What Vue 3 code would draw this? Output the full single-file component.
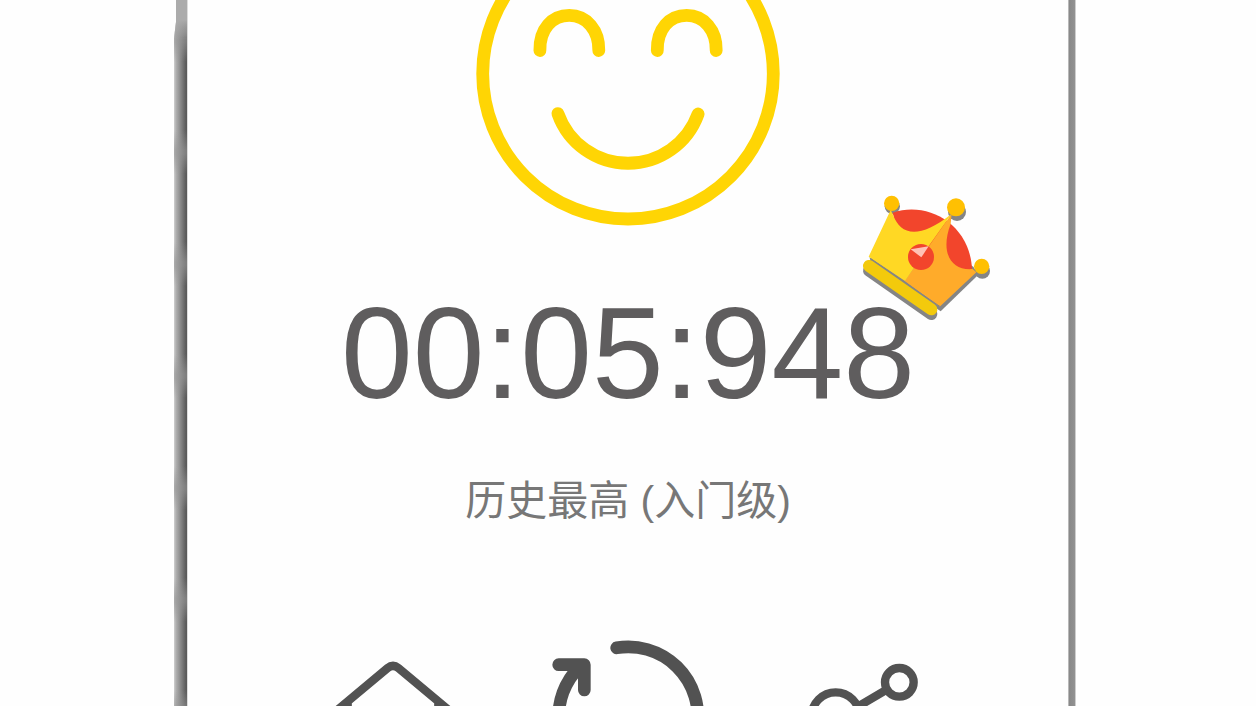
<script setup>
const result = { time: '00:05:948', caption: '历史最高 (入门级)' }
</script>

<template>
  <div class="page">
    <div class="phone">
      <div class="edge edge-left"></div>
      <main class="screen">
        <svg class="face" viewBox="470 0 316 232" fill="none" stroke="#ffd504" stroke-width="12.8" stroke-linecap="round" aria-hidden="true">
          <circle cx="628" cy="73.7" r="145.3" />
          <path d="M539.9 50.5C539.5 29 552 15.4 569.3 15.4S599.2 30 598.8 50.5" />
          <path d="M657.3 50.5C656.9 29 669.4 15.4 686.7 15.4S716.6 30 716.2 50.5" />
          <path d="M557.9 113.6A74.4 74.4 0 0 0 698.1 114" />
        </svg>

        <div class="score">
          <span class="time">{{ result.time }}</span>
          <svg class="crown" viewBox="30 30 405 405" aria-hidden="true">
            <g fill="#858585">
              <circle cx="127" cy="79" r="23" />
              <circle cx="321" cy="96" r="27" />
              <circle cx="397" cy="273" r="23" />
              <path d="M57 246L272 394L385 284L370 260L120 110Z" />
              <path d="M57 272L244 402" stroke="#858585" stroke-width="36" stroke-linecap="round" />
            </g>
            <path d="M128 98C235 61 361 135 366 268L330 290L150 190Z" fill="#f2452c" />
            <path d="M305 101L302 132C269 219 304 273 368 267L379 277L269 380L164 303Z" fill="#ffab2a" />
            <path d="M122 90L129 104C151 164 205 181 305 101L240 193L165 303L56 230Z" fill="#ffd824" />
            <circle cx="213" cy="231" r="39" fill="#f2452c" />
            <path d="M182 208L236 199L214 232Z" fill="#ffc1b5" />
            <path d="M59 234L272 381" stroke="#858585" stroke-width="3" />
            <path d="M57 258L244 388" stroke="#f3ca0c" stroke-width="36" stroke-linecap="round" />
            <g fill="#ffc002">
              <circle cx="125" cy="70" r="23" />
              <circle cx="318" cy="82" r="27" />
              <circle cx="395" cy="259" r="23" />
            </g>
          </svg>
        </div>

        <p class="caption">{{ result.caption }}</p>

        <nav class="actions">
          <button type="button" aria-label="首页">
            <svg viewBox="-19 0 480 480" fill="none" stroke="#525252" stroke-width="25">
              <path d="M35 256L205 114Q221 101 237 114L407 256" stroke-linecap="round" />
              <path d="M85 220V410H357V220" stroke-linejoin="round" />
            </svg>
          </button>
          <button type="button" aria-label="重新开始">
            <svg viewBox="55 0 480 480" fill="none" stroke="#525252" stroke-width="38" stroke-linecap="round" stroke-linejoin="round">
              <path d="M261 53.5A208.5 208.5 0 1 1 150 110" />
              <path d="M87 104H164V180" />
            </svg>
          </button>
          <button type="button" aria-label="分享">
            <svg viewBox="-21 -30 480 480" fill="none" stroke="#525252" stroke-width="25">
              <circle cx="328" cy="127" r="43" />
              <circle cx="137" cy="229" r="72" />
              <circle cx="328" cy="331" r="43" />
              <path d="M290 149L200 202M290 309L200 256" />
            </svg>
          </button>
        </nav>
      </main>
      <div class="edge edge-right"></div>
    </div>
  </div>
</template>

<style>
body {
  margin: 0;
  background: #fefefe;
}
</style>

<style scoped>
.page {
  height: 100vh;
  overflow: hidden;
  background: #fefefe;
  font-family: "Liberation Sans", "Noto Sans CJK SC", sans-serif;
}
.phone {
  display: flex;
  margin: 0 180px 0 174px;
}
.edge {
  flex: none;
}
.edge-left {
  width: 14px;
  background:
    linear-gradient(90deg, transparent 13px, #dcdcdc 13px),
    linear-gradient(#ababab 20px, transparent 40px),
    repeating-linear-gradient(rgba(150, 150, 150, 0.6) 0 4px, transparent 24px 92px, rgba(150, 150, 150, 0.6) 112px) 0 38px,
    linear-gradient(90deg, #d0d0d0 0, #b0b0b0 2px, #858585 7px, #5a5a5a 12px);
  clip-path: polygon(2px 0, 100% 0, 100% 100%, 0 100%, 0 38px, 2px 22px);
}
.edge-right {
  width: 8px;
  background: linear-gradient(90deg, #b8b8b8 1px, #888 1px, #929292 7px, #cecece 7px);
}
.screen {
  flex: 1;
  display: flex;
  flex-direction: column;
  align-items: center;
}
.face {
  width: 316px;
  height: 232px;
}
.score {
  position: relative;
  margin-top: 46px;
}
.time {
  display: block;
  font-size: 129px;
  line-height: 150px;
  color: #5f5d5e;
  white-space: nowrap;
}
.crown {
  position: absolute;
  top: -88px;
  right: -80px;
  width: 135px;
  height: 135px;
}
.caption {
  margin: 43px 0 0;
  font-size: 41px;
  line-height: 60px;
  color: #777;
  white-space: nowrap;
}
.actions {
  display: grid;
  grid-template-columns: repeat(3, 1fr);
  width: 80%;
  margin-top: 99px;
}
.actions button {
  display: flex;
  justify-content: center;
  padding: 0;
  border: 0;
  background: none;
  cursor: pointer;
}
.actions svg {
  width: 160px;
  height: 160px;
}
</style>
